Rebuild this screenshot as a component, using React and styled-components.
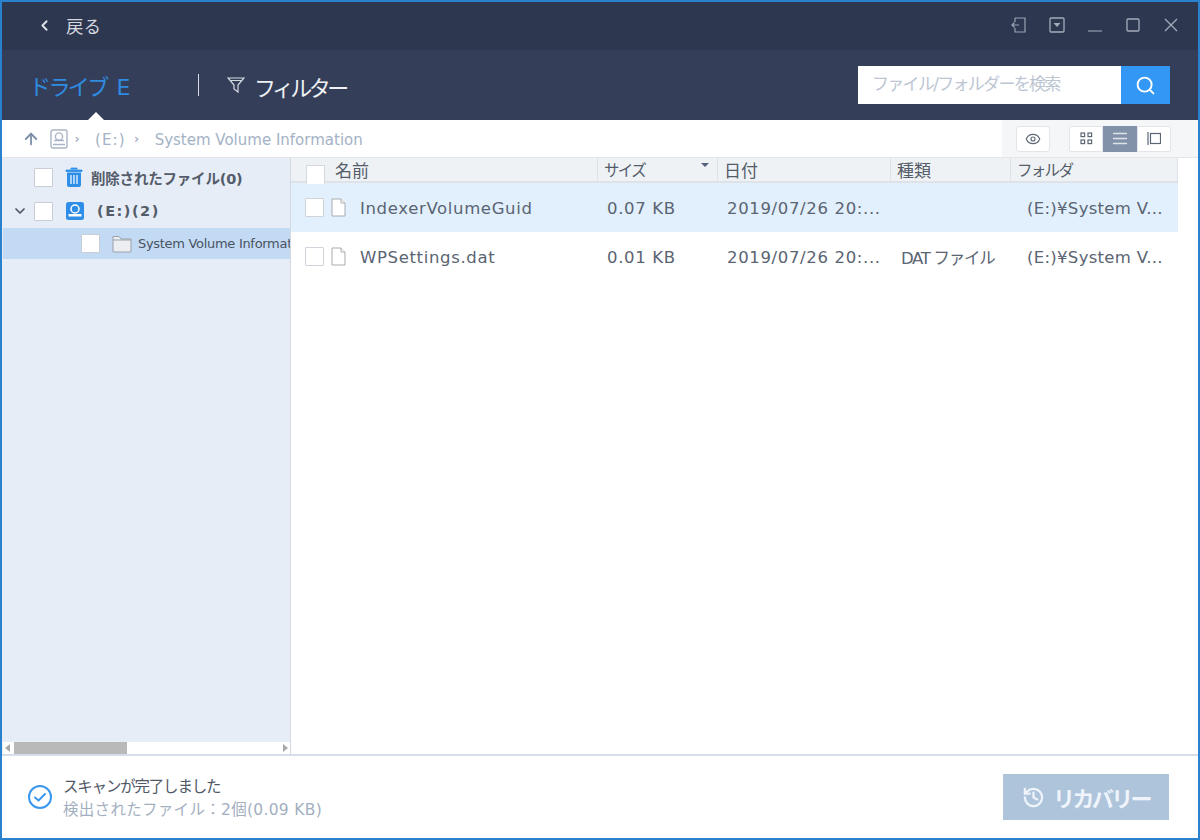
import React from "react";
import styled, { createGlobalStyle } from "styled-components";
import { ChevronLeft, ChevronDown, ArrowUp, Search, Eye, History } from "lucide-react";

const FONT = `"DejaVu Sans", "Noto Sans CJK JP", sans-serif`;

const GlobalStyle = createGlobalStyle`
  html, body { margin: 0; padding: 0; height: 100%; background: #fff; }
  body { font-family: ${FONT}; }
  * { box-sizing: border-box; }
  svg { flex: none; }
`;

const Win = styled.div`
  width: 1200px;
  height: 840px;
  display: flex;
  flex-direction: column;
  border: 2px solid #2a82cf;
  overflow: hidden;
  background: #fff;
`;

const TitleBar = styled.div`
  height: 48px;
  flex: none;
  background: #2d3750;
  display: flex;
  align-items: center;
  justify-content: space-between;
  padding: 0 19px 2px 34px;
  color: #d8dce4;
`;

const Back = styled.div`
  display: flex;
  align-items: center;
  gap: 13px;
  font-size: 17.5px;
  color: #d5d8df;
`;

const WinButtons = styled.div`
  display: flex;
  align-items: center;
  gap: 22px;
`;

const Header = styled.div`
  height: 70px;
  flex: none;
  background: #343e59;
  display: flex;
  align-items: center;
  padding: 0 28px 0 27px;
  position: relative;
`;

const DriveLabel = styled.div`
  width: 169px;
  font-size: 22px;
  color: #2f8be0;
  letter-spacing: -2.6px;
  white-space: nowrap;
`;

const DriveLetter = styled.span`
  margin-left: 10px;
  letter-spacing: 0;
`;

const Divider = styled.div`
  width: 1px;
  height: 22px;
  background: #d8dce4;
  margin-right: 28px;
`;

const Filter = styled.div`
  display: flex;
  align-items: center;
  gap: 9px;
  font-size: 22px;
  color: #eef0f4;
  letter-spacing: -3.6px;
`;

const FilterText = styled.span`
  padding-top: 2px;
`;

const Notch = styled.div`
  position: absolute;
  left: 86px;
  bottom: 0;
  width: 0;
  height: 0;
  border-left: 8px solid transparent;
  border-right: 8px solid transparent;
  border-bottom: 8px solid #fff;
`;

const SearchBox = styled.div`
  margin-left: auto;
  width: 312px;
  height: 38px;
  display: flex;
  background: #fff;
`;

const SearchText = styled.div`
  flex: 1;
  font-size: 17px;
  line-height: 36px;
  padding-left: 14px;
  color: #bcc5d2;
  letter-spacing: -1.7px;
  white-space: nowrap;
`;

const SearchBtn = styled.div`
  width: 49px;
  background: #3397f5;
  display: flex;
  align-items: center;
  justify-content: center;
  color: #fff;
`;

const Crumbs = styled.div`
  height: 38px;
  flex: none;
  display: flex;
  align-items: center;
  background: #fff;
  padding-left: 20px;
  border-bottom: 1px solid #e4e6ea;
`;

const CrumbText = styled.span`
  font-size: 15px;
  padding-top: 2px;
  color: #a4b2c6;
  white-space: nowrap;
  letter-spacing: ${(p) => p.$ls || 0}px;
`;

const CrumbSep = styled.span`
  width: ${(p) => p.$w}px;
  font-size: 13px;
  color: #8f9db1;
  padding-right: ${(p) => p.$pr || 0}px;
  text-align: center;
`;

const Tools = styled.div`
  margin-left: auto;
  width: 196px;
  height: 37px;
  background: #f5f6f8;
  display: flex;
  align-items: center;
  padding-left: 14px;
`;

const ToolBtn = styled.div`
  height: 26px;
  width: ${(p) => p.$w || 34}px;
  display: flex;
  align-items: center;
  justify-content: center;
  background: ${(p) => (p.$on ? "#8192a9" : "#fff")};
  border: 1px solid ${(p) => (p.$on ? "#8192a9" : "#e2e5ea")};
  border-radius: ${(p) => p.$r || "2px"};
`;

const Group = styled.div`
  display: flex;
  margin-left: 19px;
`;

const Body = styled.div`
  flex: 1;
  display: flex;
  min-height: 0;
`;

const Side = styled.div`
  width: 289px;
  flex: none;
  background: #e6edf7;
  border-right: 1px solid #d4d9e2;
  display: flex;
  flex-direction: column;
  padding-top: 2px;
  padding-left: 1px;
`;

const TreeRow = styled.div`
  height: ${(p) => p.$h}px;
  display: flex;
  align-items: center;
  padding-left: ${(p) => p.$indent}px;
  background: ${(p) => (p.$sel ? "#c3daf5" : "transparent")};
  overflow: hidden;
  white-space: nowrap;
`;

const Check = styled.span`
  display: inline-block;
  flex: none;
  width: 19px;
  height: 19px;
  background: #fff;
  border: 1px solid ${(p) => p.$c || "#c9ced6"};
  border-radius: 1px;
`;

const Gap = styled.span`
  flex: none;
  width: ${(p) => p.$w}px;
`;

const TreeLabel = styled.span`
  font-size: 14.5px;
  font-weight: 700;
  color: #545c69;
  margin-left: ${(p) => p.$ml}px;
  letter-spacing: ${(p) => p.$ls || 0}px;
`;

const SubLabel = styled.span`
  font-size: 13px;
  color: #4a5361;
  margin-left: 6px;
  letter-spacing: -0.3px;
`;

const SideFill = styled.div`
  flex: 1;
`;

const HScroll = styled.div`
  height: 12px;
  flex: none;
  background: #fff;
  display: flex;
  align-items: center;
  padding: 0 2px;
  justify-content: space-between;
  position: relative;
`;

const Thumb = styled.div`
  position: absolute;
  left: 11px;
  top: 0;
  width: 113px;
  height: 12px;
  background: #b9b9b9;
`;

const Arrow = styled.span`
  width: 0;
  height: 0;
  border-top: 4px solid transparent;
  border-bottom: 4px solid transparent;
  ${(p) => (p.$right ? "border-left: 5px solid #a8a8a8;" : "border-right: 5px solid #a8a8a8;")}
`;

const Main = styled.div`
  flex: 1;
  min-width: 0;
  padding-right: 21px;
`;

const Grid = styled.div`
  display: grid;
  grid-template-columns: 307px 120px 173px 120px 167px;
`;

const HeadCell = styled.div`
  height: 25px;
  background: #eff2f5;
  border-right: 1px solid #dfe2e7;
  border-bottom: 2px solid #dfe2e7;
  font-size: ${(p) => (p.$kana ? 15.5 : 17)}px;
  letter-spacing: ${(p) => (p.$kana ? -1.7 : 0)}px;
  color: #545c69;
  line-height: 26px;
  padding-left: ${(p) => p.$pl || 6}px;
  position: relative;
  white-space: nowrap;
  display: flex;
  align-items: flex-start;
`;

const HeadCheck = styled(Check)`
  margin: 7px 10px 0 9px;
  border-bottom: none;
  border-color: #d5d9df;
`;

const SortMark = styled.span`
  position: absolute;
  right: 8px;
  top: 5px;
  width: 0;
  height: 0;
  border-left: 4px solid transparent;
  border-right: 4px solid transparent;
  border-top: 4px solid #55607a;
`;

const RowCell = styled.div`
  height: 49px;
  background: ${(p) => (p.$sel ? "#e2f0fd" : "#fff")};
  display: flex;
  align-items: center;
  font-size: 16.5px;
  color: #5a6472;
  padding-left: ${(p) => p.$pl || 0}px;
  white-space: nowrap;
  overflow: hidden;
`;

const CellText = styled.span`
  padding-top: 2px;
  margin-left: ${(p) => p.$ml || 0}px;
  letter-spacing: ${(p) => p.$ls ?? 0.65}px;
`;

const TypeText = styled.span`
  letter-spacing: -1.3px;
`;

const Footer = styled.div`
  height: 84px;
  flex: none;
  border-top: 2px solid #d6deea;
  display: flex;
  align-items: center;
  padding: 0 29px 0 25px;
  background: #fff;
`;

const Status = styled.div`
  margin-left: 10px;
  padding-top: 3px;
  display: flex;
  flex-direction: column;
  font-size: 15.5px;
  line-height: 23px;
  letter-spacing: -1.2px;
  color: #4f5866;
`;

const StatusSub = styled.span`
  color: #a3afc0;
  letter-spacing: 0.3px;
`;

const Recover = styled.div`
  margin-left: auto;
  width: 166px;
  height: 46px;
  background: #adc4da;
  color: #eef4fa;
  display: flex;
  align-items: center;
  justify-content: center;
  gap: 8px;
  font-size: 22px;
  font-weight: 700;
  letter-spacing: -2.6px;
`;

const ExitIcon = () => (
  <svg width="16" height="16" viewBox="0 0 16 16" fill="none" stroke="#9aa3b3" strokeWidth="1.2">
    <path d="M4 1h10v14H4v-4M4 5V1M1 8h7M3.5 5.5L1 8l2.5 2.5" />
  </svg>
);

const DropIcon = () => (
  <svg width="16" height="16" viewBox="0 0 16 16">
    <rect x="1" y="1" width="14" height="14" rx="1" fill="none" stroke="#a4acba" strokeWidth="1.3" />
    <path d="M4.5 6h7L8 10z" fill="#a4acba" />
  </svg>
);

const MinIcon = () => (
  <svg width="16" height="16" viewBox="0 0 16 16" stroke="#8d96a7" strokeWidth="1.3">
    <path d="M1 14h14" />
  </svg>
);

const MaxIcon = () => (
  <svg width="16" height="16" viewBox="0 0 16 16" fill="none" stroke="#a4acba" strokeWidth="1.3">
    <rect x="2" y="2" width="12" height="12" rx="1" />
  </svg>
);

const CloseIcon = () => (
  <svg width="16" height="16" viewBox="0 0 16 16" stroke="#a4acba" strokeWidth="1.3">
    <path d="M2 2l12 12M14 2L2 14" />
  </svg>
);

const FunnelIcon = () => (
  <svg width="18" height="18" viewBox="0 0 18 18" fill="none" stroke="#d5d9e0" strokeWidth="1.2">
    <path d="M1 2h16l-6 7v7l-4-3V9zM4 4.5h10" />
  </svg>
);

const DriveIcon = () => (
  <svg width="18" height="20" viewBox="0 0 18 20" fill="none" stroke="#a9b5c6" strokeWidth="1.4">
    <rect x="1" y="1" width="16" height="18" rx="2" />
    <circle cx="9" cy="7.5" r="3.6" />
    <path d="M4 11.5 h10 M3 15.5h12" strokeWidth="1.6" />
  </svg>
);

const BlueDrive = () => (
  <svg width="20" height="20" viewBox="0 0 20 20">
    <rect x="1" y="1" width="18" height="18" rx="2.5" fill="#2f8fe8" />
    <circle cx="10" cy="8" r="4" fill="none" stroke="#fff" strokeWidth="1.5" />
    <path d="M3.5 13h13v2.5h-13z" fill="#fff" />
  </svg>
);

const TrashIcon = () => (
  <svg width="18" height="21" viewBox="0 0 18 21">
    <path d="M6 2.5V1h6v1.5M1 3h16v1.5H1z" fill="#2f8fe8" stroke="#2f8fe8" strokeWidth=".8" />
    <path d="M2 5.5h14V18a2 2 0 0 1-2 2H4a2 2 0 0 1-2-2z" fill="#2f8fe8" />
    <path d="M6 8v9M9 8v9M12 8v9" stroke="#fff" strokeWidth="1.2" />
  </svg>
);

const FolderIcon = () => (
  <svg width="20" height="18" viewBox="0 0 20 18" fill="#eceef1" stroke="#9ba1aa" strokeWidth="1">
    <path d="M1 1.5h6l2 2.5h10v13H1z" />
    <path d="M1 5h18" />
  </svg>
);

const FileIcon = () => (
  <svg width="15" height="19" viewBox="0 0 15 19" fill="#fff" stroke="#a8abb0" strokeWidth="1">
    <path d="M1 1h9l4 4v13H1z" />
    <path d="M10 1v4h4" />
  </svg>
);

const GridIcon = () => (
  <svg width="13" height="13" viewBox="0 0 13 13" fill="none" stroke="#5d6675" strokeWidth="1.2">
    <rect x="1" y="1" width="3.6" height="3.6" />
    <rect x="8" y="1" width="3.6" height="3.6" />
    <rect x="1" y="8" width="3.6" height="3.6" />
    <rect x="8" y="8" width="3.6" height="3.6" />
  </svg>
);

const ListIcon = () => (
  <svg width="14" height="13" viewBox="0 0 14 13" stroke="#dfe4ea" strokeWidth="1.3">
    <path d="M0 1.5h14M0 6.5h14M0 11.5h14" />
  </svg>
);

const PaneIcon = () => (
  <svg width="14" height="13" viewBox="0 0 14 13" fill="none" stroke="#5d6675" strokeWidth="1.2">
    <path d="M1 0v13" />
    <rect x="3.5" y="1.5" width="10" height="10" />
  </svg>
);

const CheckCircle = () => (
  <svg width="26" height="26" viewBox="0 0 26 26" fill="none" stroke="#3a97ee" strokeWidth="2">
    <circle cx="13" cy="13" r="11" />
    <path d="M8 13.5l3.5 3L18 10" strokeLinecap="round" strokeLinejoin="round" />
  </svg>
);

const files = [
  { name: "IndexerVolumeGuid", size: "0.07 KB", date: "2019/07/26 20:...", type: "", sel: true },
  { name: "WPSettings.dat", size: "0.01 KB", date: "2019/07/26 20:...", type: "DAT ファイル" },
];

export default function App() {
  return (
    <Win>
      <GlobalStyle />
      <TitleBar>
        <Back>
          <ChevronLeft size={17} strokeWidth={2.6} color="#e0e3e9" />
          戻る
        </Back>
        <WinButtons>
          <ExitIcon />
          <DropIcon />
          <MinIcon />
          <MaxIcon />
          <CloseIcon />
        </WinButtons>
      </TitleBar>

      <Header>
        <DriveLabel>
          ドライブ<DriveLetter>E</DriveLetter>
        </DriveLabel>
        <Divider />
        <Filter>
          <FunnelIcon />
          <FilterText>フィルター</FilterText>
        </Filter>
        <Notch />
        <SearchBox>
          <SearchText>ファイル/フォルダーを検索</SearchText>
          <SearchBtn>
            <Search size={21} strokeWidth={2.2} />
          </SearchBtn>
        </SearchBox>
      </Header>

      <Crumbs>
        <ArrowUp size={18} strokeWidth={2.4} color="#7c8ea8" />
        <Gap $w={10} />
        <DriveIcon />
        <CrumbSep $w={27} $pr={9}>›</CrumbSep>
        <CrumbText $ls={1.1}>(E:)</CrumbText>
        <CrumbSep $w={29} $pr={7}>›</CrumbSep>
        <CrumbText>System Volume Information</CrumbText>
        <Tools>
          <ToolBtn $r="3px">
            <Eye size={16} strokeWidth={1.7} color="#5d6675" />
          </ToolBtn>
          <Group>
            <ToolBtn $r="2px 0 0 2px">
              <GridIcon />
            </ToolBtn>
            <ToolBtn $on $r="0">
              <ListIcon />
            </ToolBtn>
            <ToolBtn $r="0 2px 2px 0">
              <PaneIcon />
            </ToolBtn>
          </Group>
        </Tools>
      </Crumbs>

      <Body>
        <Side>
          <TreeRow $h={34} $indent={31}>
            <Check />
            <Gap $w={12} />
            <TrashIcon />
            <TreeLabel $ml={8} $ls={-0.2}>削除されたファイル(0)</TreeLabel>
          </TreeRow>
          <TreeRow $h={34} $indent={9}>
            <ChevronDown size={16} strokeWidth={2.6} color="#4d5766" />
            <Gap $w={6} />
            <Check />
            <Gap $w={12} />
            <BlueDrive />
            <TreeLabel $ml={12} $ls={1.5}>(E:)(2)</TreeLabel>
          </TreeRow>
          <TreeRow $h={31} $indent={78} $sel>
            <Check />
            <Gap $w={12} />
            <FolderIcon />
            <SubLabel>System Volume Information</SubLabel>
          </TreeRow>
          <SideFill />
          <HScroll>
            <Thumb />
            <Arrow />
            <Arrow $right />
          </HScroll>
        </Side>

        <Main>
          <Grid>
            <HeadCell $pl={0}>
              <HeadCheck />
              名前
            </HeadCell>
            <HeadCell $kana>
              サイズ
              <SortMark />
            </HeadCell>
            <HeadCell>日付</HeadCell>
            <HeadCell>種類</HeadCell>
            <HeadCell $kana>フォルダ</HeadCell>
            {files.map((f) => (
              <React.Fragment key={f.name}>
                <RowCell $sel={f.sel} $pl={14}>
                  <Check $c="#d0d4da" />
                  <Gap $w={7} />
                  <FileIcon />
                  <CellText $ml={14}>{f.name}</CellText>
                </RowCell>
                <RowCell $sel={f.sel} $pl={9}>
                  <CellText>{f.size}</CellText>
                </RowCell>
                <RowCell $sel={f.sel} $pl={9}>
                  <CellText>{f.date}</CellText>
                </RowCell>
                <RowCell $sel={f.sel} $pl={10}>
                  <TypeText>{f.type}</TypeText>
                </RowCell>
                <RowCell $sel={f.sel} $pl={16}>
                  <CellText $ls={0.3}>(E:)¥System V...</CellText>
                </RowCell>
              </React.Fragment>
            ))}
          </Grid>
        </Main>
      </Body>

      <Footer>
        <CheckCircle />
        <Status>
          スキャンが完了しました
          <StatusSub>検出されたファイル：2個(0.09 KB)</StatusSub>
        </Status>
        <Recover>
          <History size={23} strokeWidth={2.4} />
          リカバリー
        </Recover>
      </Footer>
    </Win>
  );
}
